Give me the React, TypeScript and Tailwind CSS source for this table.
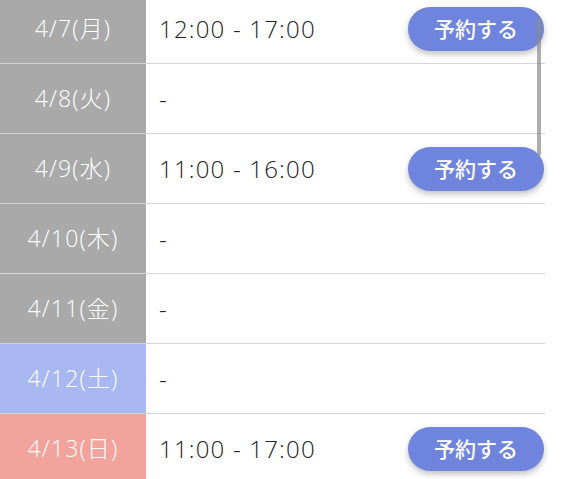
const rows = [
    { date: "4/7(月)", time: "12:00 - 17:00", kind: "weekday" },
    { date: "4/8(火)", time: "-", kind: "weekday" },
    { date: "4/9(水)", time: "11:00 - 16:00", kind: "weekday" },
    { date: "4/10(木)", time: "-", kind: "weekday" },
    { date: "4/11(金)", time: "-", kind: "weekday" },
    { date: "4/12(土)", time: "-", kind: "sat" },
    { date: "4/13(日)", time: "11:00 - 17:00", kind: "sun" },
]

const dayBg: Record<string, string> = {
    weekday: "bg-[#a9a9a9]",
    sat: "bg-[#a9b8f1]",
    sun: "bg-[#f2a39b]",
}

export default function App()
{
    return (<div className="relative w-[576px] h-[479px] overflow-hidden bg-white" style={{ fontFamily: '"Open Sans", "Noto Sans CJK JP", sans-serif' }}>
        <div className="w-[545px] -mt-[6px]">
            {rows.map(row => (
                <div key={row.date} className="flex h-[70px] border-b border-[#d4d4d4]">
                    <div className={`w-[146px] shrink-0 flex items-center justify-center text-[23px] font-light tracking-[0.05em] text-white ${dayBg[row.kind]}`}>
                        {row.date}
                    </div>
                    <div className="flex flex-1 items-center justify-between pl-[13px] pr-[1px]">
                        <p className="text-[24px] font-light tracking-[0.05em] text-[#222]">{row.time}</p>
                        {row.time !== "-" && (
                            <button className="w-[136px] h-[44px] rounded-full bg-[#6f85dd] text-white text-[21px] font-medium shadow-[0_3px_6px_rgba(0,0,0,0.25)]" style={{ fontFamily: '"Noto Sans CJK JP", sans-serif' }}>
                                予約する
                            </button>
                        )}
                    </div>
                </div>
            ))}
        </div>
        <div className="absolute left-[537px] top-[18px] w-[4px] h-[138px] rounded-full bg-[#8a8a8a]/70" />
    </div>)
}
